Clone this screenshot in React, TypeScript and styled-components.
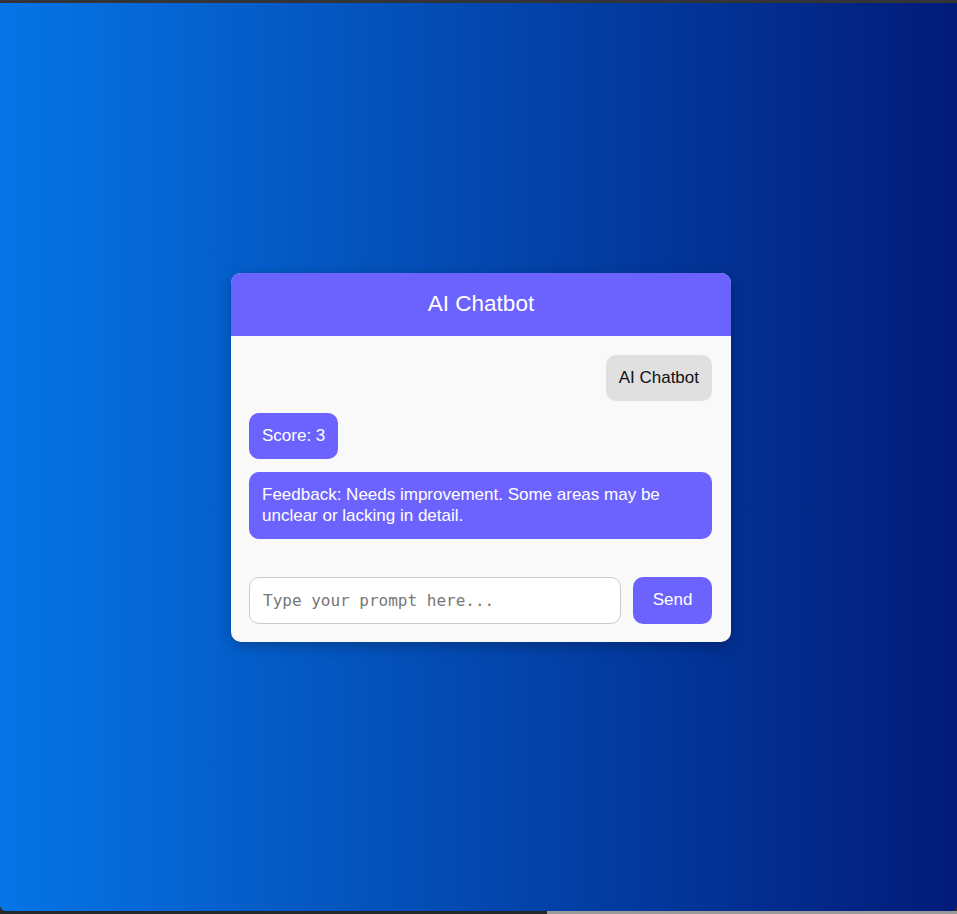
import React from 'react'
import styled, { createGlobalStyle } from 'styled-components'

type Sender = 'user' | 'bot'

interface Message {
  id: number
  sender: Sender
  text: string
}

const messages: Message[] = [
  { id: 1, sender: 'user', text: 'AI Chatbot' },
  { id: 2, sender: 'bot', text: 'Score: 3' },
  {
    id: 3,
    sender: 'bot',
    text: 'Feedback: Needs improvement. Some areas may be unclear or lacking in detail.',
  },
]

const App = () => {
  const [prompt, setPrompt] = React.useState('')

  return (
    <Frame>
      <GlobalStyle />
      <TopEdge />
      <Screen>
        <Card>
          <Header>
            <h2>AI Chatbot</h2>
          </Header>
          <ChatBox>
            {messages.map((m) => (
              <Bubble key={m.id} $sender={m.sender}>
                {m.text}
              </Bubble>
            ))}
          </ChatBox>
          <InputRow>
            <PromptInput
              rows={1}
              value={prompt}
              onChange={(e) => setPrompt(e.target.value)}
              placeholder="Type your prompt here..."
            />
            <SendButton>Send</SendButton>
          </InputRow>
        </Card>
      </Screen>
      <BottomEdge>
        <DarkPart />
        <GreyPart />
      </BottomEdge>
    </Frame>
  )
}

const GlobalStyle = createGlobalStyle`
  html, body {
    margin: 0;
    padding: 0;
    background: #2e2e2e;
    font-family: "Liberation Sans", Arial, sans-serif;
  }
  * {
    box-sizing: border-box;
  }
`

const Frame = styled.div`
  display: flex;
  flex-direction: column;
  height: 914px;
  overflow: hidden;
`

const TopEdge = styled.div`
  height: 3px;
  background: #333438;
`

const Screen = styled.div`
  flex: 1;
  display: flex;
  align-items: center;
  justify-content: center;
  padding-left: 5px;
  background: linear-gradient(to right, #0575e6, #021b79);
  border-radius: 0 0 6px 6px;
`

const BottomEdge = styled.div`
  height: 3px;
  display: flex;
`

const DarkPart = styled.div`
  width: 547px;
  background: #26272b;
`

const GreyPart = styled.div`
  flex: 1;
  background: #9a9a9a;
`

const Card = styled.div`
  width: 500px;
  background: #f9f9f9;
  border-radius: 10px;
  overflow: hidden;
  box-shadow: 0 4px 14px rgba(0, 0, 0, 0.25);
`

const Header = styled.div`
  height: 63px;
  display: flex;
  align-items: center;
  justify-content: center;
  background: #6c63ff;
  color: #fff;

  h2 {
    margin: 0;
    font-size: 22.5px;
    font-weight: normal;
  }
`

const ChatBox = styled.div`
  display: flex;
  flex-direction: column;
  gap: 12.5px;
  padding: 19px 19px 19px 18px;
`

const Bubble = styled.div<{ $sender: Sender }>`
  max-width: 100%;
  padding: 12px 13px 13px;
  border-radius: 10px;
  font-size: 17px;
  line-height: 21px;
  align-self: ${(p) => (p.$sender === 'user' ? 'flex-end' : 'flex-start')};
  background: ${(p) => (p.$sender === 'user' ? '#e0e0e0' : '#6c63ff')};
  color: ${(p) => (p.$sender === 'user' ? '#111' : '#fff')};
`

const InputRow = styled.div`
  display: flex;
  gap: 12px;
  padding: 19px 19px 18px 18px;
`

const PromptInput = styled.textarea`
  flex: 1;
  height: 47px;
  padding: 13px 13px;
  border: 1px solid #ccc;
  border-radius: 10px;
  resize: none;
  outline: none;
  background: #fff;
  font-family: "DejaVu Sans Mono", monospace;
  font-size: 16px;
  line-height: 19px;
  overflow: hidden;

  &::placeholder {
    color: #777;
  }
`

const SendButton = styled.button`
  width: 79px;
  height: 47px;
  border: none;
  border-radius: 10px;
  background: #6c63ff;
  color: #fff;
  font-family: "Liberation Sans", Arial, sans-serif;
  font-size: 17px;
  cursor: pointer;
`

export default App
